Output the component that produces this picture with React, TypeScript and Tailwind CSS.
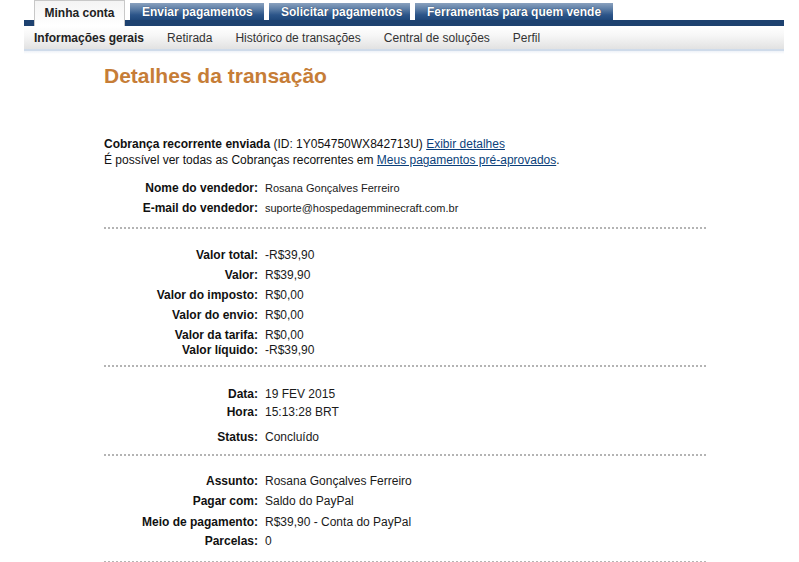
import React from "react";

const font = { fontFamily: '"Liberation Sans", Arial, sans-serif' };

function Row({
  label,
  value,
  h = "h-[20px]",
  small = false,
}: {
  label: string;
  value: string;
  h?: string;
  small?: boolean;
}) {
  return (
    <div className={`flex ${h} leading-[20px]`}>
      <div className="w-[154px] shrink-0 text-right text-[12px] font-bold text-[#111]">{label}</div>
      <div className={`pl-[7px] text-[#1a1a1a] ${small ? "text-[11px]" : "text-[12px]"}`}>{value}</div>
    </div>
  );
}

function Dots() {
  return <div className="w-[602px] border-t-2 border-dotted border-[#b4b4b4]" />;
}

const blueTab =
  "h-[17px] mb-[6px] pl-[12px] leading-[18px] text-[12px] font-bold text-white bg-[linear-gradient(to_bottom,#8aa1be_0%,#5d7ea6_35%,#2c5589_70%,#1f477a_100%)] [text-shadow:0_0_1px_#0c2447]";

export default function App() {
  return (
    <div className="min-h-[562px] w-[799px] bg-white" style={font}>
      {/* top navigation */}
      <div className="ml-[24px] w-[760px]">
        <div className="flex h-[26px] items-end gap-[5px] pl-[10px] bg-[linear-gradient(to_bottom,transparent_20px,#1d416f_20px)]">
          <div className="h-[26px] w-[91px] self-end border border-b-0 border-[#c8c8c8] bg-[linear-gradient(to_bottom,#f4f4f4,#ffffff)] pt-[5px] text-center text-[12px] font-bold leading-[14px] text-[#222]">
            Minha conta
          </div>
          <div className={`${blueTab} w-[134px]`}>Enviar pagamentos</div>
          <div className={`${blueTab} w-[141px]`}>Solicitar pagamentos</div>
          <div className={`${blueTab} w-[198px]`}>Ferramentas para quem vende</div>
        </div>
        <div className="flex h-[23px] items-center gap-[23px] pl-[10px] text-[12px] text-[#333] bg-[linear-gradient(to_bottom,#ffffff_0%,#f7f7f7_40%,#e2e2e2_100%)]">
          <span className="font-bold text-[#222]">Informações gerais</span>
          <span>Retirada</span>
          <span>Histórico de transações</span>
          <span>Central de soluções</span>
          <span>Perfil</span>
        </div>
        <div className="h-[2px] bg-[#cfdbea]" />
        <div className="h-[3px] bg-[linear-gradient(to_bottom,#eef2f8,#ffffff)]" />
      </div>

      {/* content */}
      <div className="ml-[104px]">
        <h1 className="mt-[10px] h-[24px] text-[21px] font-bold leading-[24px] text-[#c67d37]">
          Detalhes da transação
        </h1>

        <div className="mt-[48px] text-[12px] leading-[16px] text-[#111]">
          <div>
            <span className="font-bold">Cobrança recorrente enviada</span> (ID: 1Y054750WX842713U){" "}
            <a className="text-[#0b3f7a] underline" href="#">
              Exibir detalhes
            </a>
          </div>
          <div>
            É possível ver todas as Cobranças recorrentes em{" "}
            <a className="text-[#0b3f7a] underline" href="#">
              Meus pagamentos pré-aprovados
            </a>
            .
          </div>
        </div>

        <div className="mt-[10px]">
          <Row label="Nome do vendedor:" value="Rosana Gonçalves Ferreiro" small />
          <Row label="E-mail do vendedor:" value="suporte@hospedagemminecraft.com.br" small />
        </div>

        <div className="mt-[9px]">
          <Dots />
        </div>

        <div className="mt-[16px]">
          <Row label="Valor total:" value="-R$39,90" />
          <Row label="Valor:" value="R$39,90" />
          <Row label="Valor do imposto:" value="R$0,00" />
          <Row label="Valor do envio:" value="R$0,00" />
          <Row label="Valor da tarifa:" value="R$0,00" h="h-[15px]" />
          <Row label="Valor líquido:" value="-R$39,90" />
        </div>

        <div className="mt-[5px]">
          <Dots />
        </div>

        <div className="mt-[17px]">
          <Row label="Data:" value="19 FEV 2015" h="h-[18px]" />
          <Row label="Hora:" value="15:13:28 BRT" h="h-[25px]" />
          <Row label="Status:" value="Concluído" />
        </div>

        <div className="mt-[7px]">
          <Dots />
        </div>

        <div className="mt-[15px]">
          <Row label="Assunto:" value="Rosana Gonçalves Ferreiro" />
          <Row label="Pagar com:" value="Saldo do PayPal" h="h-[21px]" />
          <Row label="Meio de pagamento:" value="R$39,90 - Conta do PayPal" h="h-[19px]" />
          <Row label="Parcelas:" value="0" />
        </div>

        <div className="mt-[10px]">
          <Dots />
        </div>
      </div>
    </div>
  );
}
